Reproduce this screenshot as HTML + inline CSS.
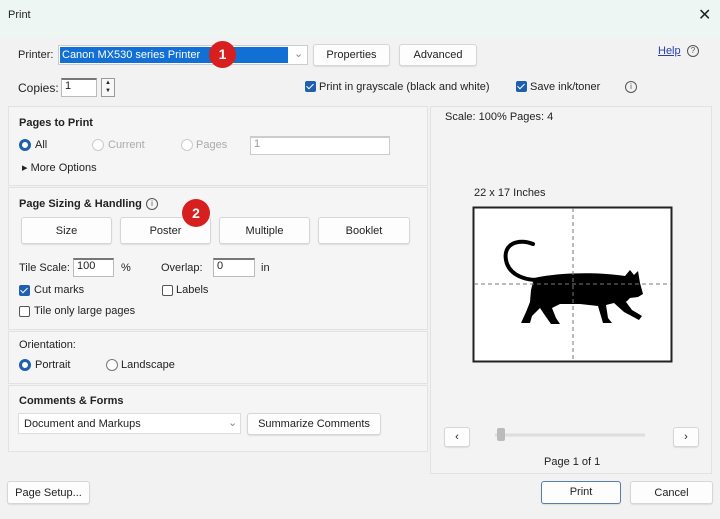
<!DOCTYPE html>
<html><head><meta charset="utf-8"><style>
*{box-sizing:border-box;margin:0;padding:0}
body{width:720px;height:519px;background:#f2f2f2;font-family:"Liberation Sans",sans-serif;font-size:11px;color:#222;position:relative;overflow:hidden}
.a{position:absolute}
.t{position:absolute;white-space:nowrap}
.btn{position:absolute;background:#fdfdfd;border:1px solid #d6d6d6;border-radius:3px;text-align:center;font-size:11px;color:#222;box-shadow:0 1px 1px #ddd}
.inp{position:absolute;background:#fff;border:1px solid #bbb;border-top:2px solid #777;font-size:11px;padding-left:3px}
.sec{position:absolute;background:#f5f5f5;border:1px solid #e2e2e2}
.cb{position:absolute;width:11px;height:11px;border-radius:2px;background:#1f5fb0}
.cb:after{content:"";position:absolute;left:3px;top:1px;width:3px;height:6px;border:solid #fff;border-width:0 1.5px 1.5px 0;transform:rotate(45deg)}
.ub{position:absolute;width:11px;height:11px;border-radius:2px;border:1px solid #555;background:#fff}
.rd{position:absolute;width:12px;height:12px;border-radius:50%;border:1px solid #777;background:#fff}
.rd.on{border:3px solid #1f5fb0}
.rd.dis{border-color:#ccc}
.b{font-weight:bold}
.red{position:absolute;border-radius:50%;background:#d81f1f;color:#fff;font-weight:bold;text-align:center;font-size:14px}
.info{position:absolute;width:12px;height:12px;border:1px solid #555;border-radius:50%;font-size:8px;text-align:center;line-height:10px;color:#555}
</style></head><body>
<div class="a" style="left:0;top:0;width:720px;height:38px;background:#eef6f3"></div>
<div class="t" style="left:8px;top:9px">Print</div>
<div class="t" style="left:698px;top:5px;font-size:16px">✕</div>

<div class="t" style="left:18px;top:49px">Printer:</div>
<div class="a" style="left:58px;top:45px;width:250px;height:20px;background:#fff;border:1px solid #ccc"></div>
<div class="a" style="left:60px;top:47px;width:228px;height:16px;background:#1270d4"></div>
<div class="t" style="left:62px;top:49px;color:#fff">Canon MX530 series Printer</div>
<div class="t" style="left:294px;top:47px;color:#888">⌄</div>
<div class="red" style="left:209px;top:41px;width:27px;height:27px;line-height:27px">1</div>
<div class="btn" style="left:313px;top:44px;width:77px;height:22px;line-height:20px">Properties</div>
<div class="btn" style="left:399px;top:44px;width:78px;height:22px;line-height:20px">Advanced</div>
<div class="t" style="left:658px;top:45px;color:#2a3fb0;text-decoration:underline">Help</div>
<div class="info" style="left:687px;top:45px">?</div>

<div class="t" style="left:18px;top:81px;font-size:12px">Copies:</div>
<div class="inp" style="left:61px;top:78px;width:36px;height:19px">1</div>
<div class="a" style="left:101px;top:78px;width:14px;height:19px;border:1px solid #999;background:#f7f7f7;font-size:6px;text-align:center;line-height:8px">▲<br>▼</div>
<div class="cb" style="left:305px;top:81px"></div>
<div class="t" style="left:319px;top:81px">Print in grayscale (black and white)</div>
<div class="cb" style="left:516px;top:81px"></div>
<div class="t" style="left:530px;top:81px">Save ink/toner</div>
<div class="info" style="left:625px;top:81px">i</div>

<div class="sec" style="left:8px;top:106px;width:420px;height:80px"></div>
<div class="t b" style="left:19px;top:117px">Pages to Print</div>
<div class="rd on" style="left:19px;top:139px"></div><div class="t" style="left:35px;top:139px">All</div>
<div class="rd dis" style="left:92px;top:139px"></div><div class="t" style="left:108px;top:139px;color:#aaa">Current</div>
<div class="rd dis" style="left:181px;top:139px"></div><div class="t" style="left:196px;top:139px;color:#aaa">Pages</div>
<div class="inp" style="left:250px;top:136px;width:140px;height:19px;border-color:#ccc;color:#999">1</div>
<div class="t" style="left:22px;top:161px">▸ More Options</div>

<div class="sec" style="left:8px;top:187px;width:420px;height:143px"></div>
<div class="t b" style="left:19px;top:198px">Page Sizing &amp; Handling</div>
<div class="info" style="left:146px;top:198px">i</div>
<div class="btn" style="left:21px;top:217px;width:91px;height:27px;line-height:26px">Size</div>
<div class="btn" style="left:120px;top:217px;width:91px;height:27px;line-height:26px">Poster</div>
<div class="btn" style="left:219px;top:217px;width:91px;height:27px;line-height:26px">Multiple</div>
<div class="btn" style="left:318px;top:217px;width:92px;height:27px;line-height:26px">Booklet</div>
<div class="red" style="left:182px;top:199px;width:28px;height:28px;line-height:28px">2</div>
<div class="t" style="left:19px;top:262px">Tile Scale:</div>
<div class="inp" style="left:73px;top:258px;width:41px;height:19px">100</div>
<div class="t" style="left:121px;top:262px">%</div>
<div class="t" style="left:161px;top:262px">Overlap:</div>
<div class="inp" style="left:213px;top:258px;width:42px;height:19px">0</div>
<div class="t" style="left:261px;top:262px">in</div>
<div class="cb" style="left:19px;top:285px"></div><div class="t" style="left:34px;top:284px">Cut marks</div>
<div class="ub" style="left:162px;top:285px"></div><div class="t" style="left:176px;top:284px">Labels</div>
<div class="ub" style="left:19px;top:306px"></div><div class="t" style="left:34px;top:305px">Tile only large pages</div>

<div class="sec" style="left:8px;top:331px;width:420px;height:53px"></div>
<div class="t" style="left:19px;top:339px">Orientation:</div>
<div class="rd on" style="left:19px;top:359px"></div><div class="t" style="left:35px;top:359px">Portrait</div>
<div class="rd" style="left:106px;top:359px"></div><div class="t" style="left:121px;top:359px">Landscape</div>

<div class="sec" style="left:8px;top:385px;width:420px;height:67px"></div>
<div class="t b" style="left:19px;top:395px">Comments &amp; Forms</div>
<div class="a" style="left:18px;top:413px;width:223px;height:21px;background:#fff;border:1px solid #ddd"></div>
<div class="t" style="left:24px;top:418px">Document and Markups</div>
<div class="t" style="left:228px;top:416px;color:#888">⌄</div>
<div class="btn" style="left:247px;top:413px;width:134px;height:22px;line-height:21px">Summarize Comments</div>

<div class="sec" style="left:430px;top:106px;width:282px;height:368px;background:#f3f3f3"></div>
<div class="t" style="left:445px;top:111px">Scale: 100% Pages: 4</div>
<div class="t" style="left:474px;top:187px">22 x 17 Inches</div>
<svg class="a" style="left:0;top:0" width="720" height="519">
<rect x="473.5" y="207.5" width="198" height="154" fill="#fff" stroke="#222" stroke-width="2"/>
<path d="M533 244 C518 238 503 244 506 260 C508 272 520 280 538 280" fill="none" stroke="#000" stroke-width="4" stroke-linecap="round"/>
<path d="M534 278 C560 272 600 272 625 276 L630 270 L634 275 L638 271 L640 283 L643 294 L638 297 L630 298 L626 302 L632 310 L642 316 L639 320 L624 312 L614 303 L606 305 L608 318 L612 323 L603 323 L598 306 L580 304 L560 304 L552 308 L556 318 L560 324 L551 324 L544 314 L540 308 L532 316 L530 323 L521 323 L526 312 L530 302 L531 290 Z" fill="#000"/>
<line x1="573" y1="208" x2="573" y2="361" stroke="#777" stroke-dasharray="4 3"/>
<line x1="474" y1="284" x2="671" y2="284" stroke="#777" stroke-dasharray="4 3"/>
<line x1="495" y1="435" x2="645" y2="435" stroke="#ddd" stroke-width="3"/>
<rect x="497" y="428" width="8" height="13" rx="2" fill="#bbb"/>
</svg>
<div class="btn" style="left:444px;top:427px;width:26px;height:20px;line-height:18px">‹</div>
<div class="btn" style="left:673px;top:427px;width:26px;height:20px;line-height:18px">›</div>
<div class="t" style="left:544px;top:456px">Page 1 of 1</div>

<div class="btn" style="left:7px;top:481px;width:83px;height:23px;line-height:22px">Page Setup...</div>
<div class="btn" style="left:541px;top:481px;width:80px;height:23px;line-height:21px;border:1px solid #5a7ea8">Print</div>
<div class="btn" style="left:630px;top:481px;width:83px;height:23px;line-height:22px">Cancel</div>
</body></html>
